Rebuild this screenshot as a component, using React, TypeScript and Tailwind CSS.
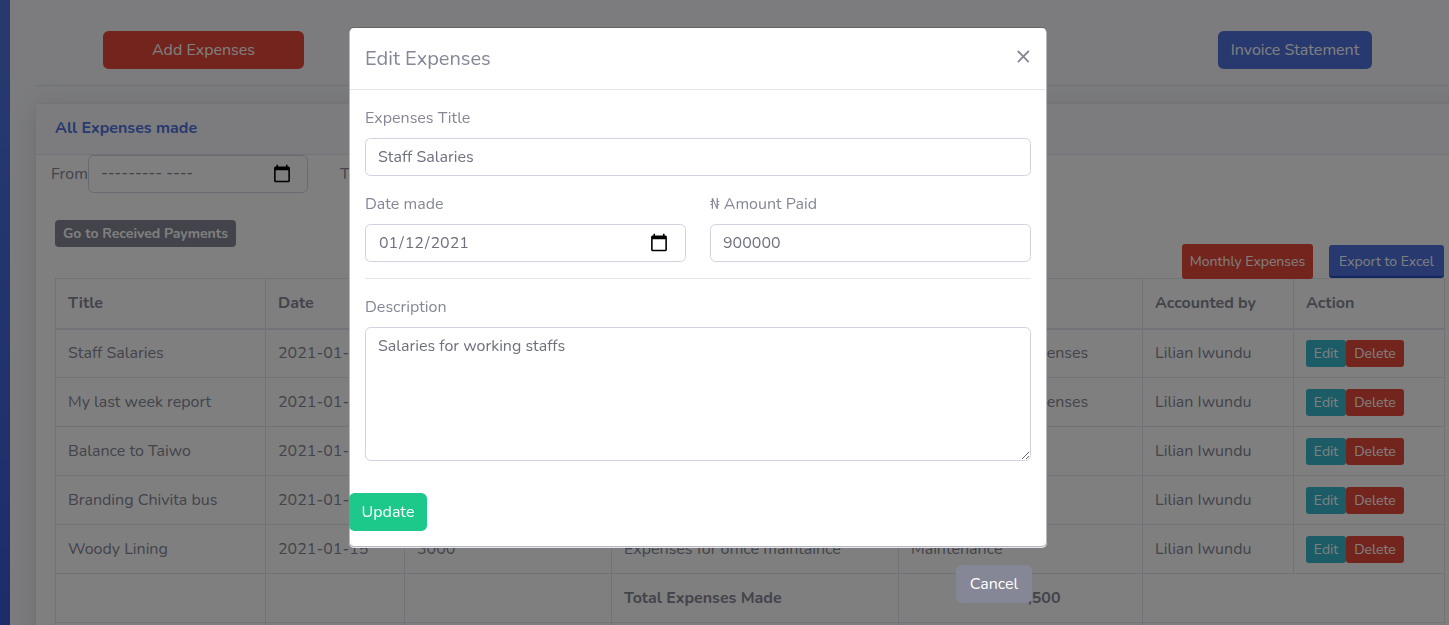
const rows = [
  ["Staff Salaries", "2021-01-12", "900000", "Salaries for working staffs", "Administrative Expenses"],
  ["My last week report", "2021-01-13", "45000", "Weekly report for staffs", "Administrative Expenses"],
  ["Balance to Taiwo", "2021-01-14", "20000", "Balance of payment", "Others"],
  ["Branding Chivita bus", "2021-01-14", "15500", "Branding of the bus", "Branding"],
  ["Woody Lining", "2021-01-15", "3000", "Expenses for office maintaince", "Maintenance"],
];

function Th({ children }: { children?: React.ReactNode }) {
  return <th className="border border-b-2 border-[#e3e6f0] px-3 text-left font-bold">{children}</th>;
}
function Td({ children, bold, span }: { children?: React.ReactNode; bold?: boolean; span?: number }) {
  return <td colSpan={span} className={`overflow-hidden whitespace-nowrap border border-[#e3e6f0] px-3 ${bold ? "font-bold" : ""}`}>{children}</td>;
}

const dateIcon = "[&::-webkit-calendar-picker-indicator]:h-[20px] [&::-webkit-calendar-picker-indicator]:w-[20px]";

export default function App() {
  return (
    <div className="relative h-[625px] w-[1449px] overflow-hidden bg-[#f8f9fc] text-base text-[#858796] font-['Nunito','Noto_Sans',sans-serif]">
      <div className="flex h-full">
        <div className="w-[10px] shrink-0 bg-[linear-gradient(180deg,#4e73df_10%,#3a5ad6_100%)]" />
        <div className="min-w-0 flex-1 pl-[24px]">
          <div className="flex h-[86px] items-start justify-between border-b border-[#e3e6f0] pl-[69px] pr-[77px] pt-[31px]">
            <button className="h-[38px] w-[201px] rounded-[5.6px] bg-[#e74a3b] text-white">Add Expenses</button>
            <button className="h-[38px] w-[154px] rounded-[5.6px] bg-[#4e73df] text-white">Invoice Statement</button>
          </div>
          <div className="ml-px mt-[17px] w-[1450px] rounded-l-[5.6px] border border-[#e3e6f0] bg-white shadow-[0_2px_28px_rgba(58,59,69,0.15)]">
            <div className="flex h-[51px] items-center border-b border-[#e3e6f0] bg-[#f8f9fc] pb-[2px] pl-[19px] font-bold text-[#4e73df]">All Expenses made</div>
            <div className="pl-[19px]">
              <div className="flex h-[38px] items-center">
                <span className="-ml-[4px] w-[37px]">From</span>
                <div className="relative h-[38px] w-[220px]">
                  <input type="date" className={`h-full w-full rounded-[5.6px] border border-[#d1d3e2] bg-white pl-3 pr-[13px] text-[#6e707e] [&::-webkit-datetime-edit]:opacity-0 ${dateIcon}`} />
                  <span className="absolute left-[13px] top-[6px] text-[#858796]">--------- ----</span>
                </div>
                <span className="ml-[32px]">To</span>
              </div>
              <div className="flex h-[85px] w-[1389px] items-start justify-between">
                <span className="mt-[27px] flex h-[27px] w-[181px] items-center justify-center rounded-[4px] bg-[#858796] text-sm font-bold text-white">Go to Received Payments</span>
                <div className="flex items-start">
                  <button className="mt-[51px] h-[35px] w-[131px] rounded-[3px] bg-[#e74a3b] text-sm text-white">Monthly Expenses</button>
                  <button className="ml-[16px] mt-[52px] h-[33px] w-[115px] rounded-[3px] border-b-2 border-[#224abe] bg-[#4e73df] pt-[2px] text-sm text-white">Export to Excel</button>
                </div>
              </div>
              <table className="w-[1389px] table-fixed border-collapse">
                <colgroup>
                  <col className="w-[210px]" />
                  <col className="w-[139px]" />
                  <col className="w-[207px]" />
                  <col className="w-[287px]" />
                  <col className="w-[244px]" />
                  <col className="w-[151px]" />
                  <col className="w-[151px]" />
                </colgroup>
                <thead>
                  <tr className="h-[50px]">
                    <Th>Title</Th><Th>Date</Th><Th>Amount</Th><Th>Description</Th><Th>Category</Th><Th>Accounted by</Th><Th>Action</Th>
                  </tr>
                </thead>
                <tbody>
                  {rows.map((r) => (
                    <tr key={r[0]} className="h-[49px]">
                      {r.map((c, i) => <Td key={i}>{c}</Td>)}
                      <Td>Lilian Iwundu</Td>
                      <Td>
                        <div className="flex">
                          <button className="h-[27px] w-[40px] rounded-[3px] bg-[#36b9cc] pt-px text-sm text-white">Edit</button>
                          <button className="h-[27px] w-[58px] rounded-[3px] bg-[#e74a3b] pt-px text-sm text-white">Delete</button>
                        </div>
                      </Td>
                    </tr>
                  ))}
                  <tr className="h-[49px]">
                    <Td /><Td /><Td />
                    <Td bold>Total Expenses Made</Td>
                    <Td bold><span className="pl-[88px]">983,500</span></Td>
                    <Td span={2} />
                  </tr>
                  <tr className="h-[49px]">
                    <Td /><Td /><Td /><Td /><Td /><Td span={2} />
                  </tr>
                </tbody>
              </table>
            </div>
          </div>
        </div>
      </div>

      <div className="fixed inset-0 bg-black/50">
        <div className="relative ml-[349px] mt-[27px] w-[698px] rounded-[4.8px] border border-black/20 bg-white bg-clip-padding shadow-[0_1px_0_#e6e6ee]">
          <div className="flex h-[62px] items-center justify-between border-b border-[#e3e6f0] pl-[15px] pr-[15px]">
            <h5 className="text-xl text-[#858796]">Edit Expenses</h5>
            <span className="-mt-[5px] text-[26px] font-medium leading-none text-[#858796]">×</span>
          </div>
          <div className="pb-[15px] pt-[16px]">
            <div className="px-[15px]">
              <label className="block leading-6">Expenses Title</label>
              <input readOnly value="Staff Salaries" className="mt-2 block h-[38px] w-full rounded-[5.6px] border border-[#d1d3e2] px-3 text-[#6e707e]" />
              <div className="mt-4 flex gap-6">
                <div className="flex-1">
                  <label className="block leading-6">Date made</label>
                  <input type="date" defaultValue="2021-01-12" className={`mt-2 block h-[38px] w-full rounded-[5.6px] border border-[#d1d3e2] pl-3 pr-[14px] text-[#6e707e] ${dateIcon}`} />
                </div>
                <div className="flex-1">
                  <label className="block leading-6">₦ Amount Paid</label>
                  <input readOnly value="900000" className="mt-2 block h-[38px] w-full rounded-[5.6px] border border-[#d1d3e2] px-3 text-[#6e707e]" />
                </div>
              </div>
              <hr className="mb-4 mt-4 border-[#e3e6f0]" />
              <label className="block leading-6">Description</label>
              <textarea readOnly value="Salaries for working staffs" className="mt-2 block h-[134px] w-full rounded-[5.6px] border border-[#d1d3e2] px-3 py-[6px] text-[#6e707e]" />
            </div>
            <button className="-ml-px mt-[32px] block h-[38px] w-[78px] rounded-[5.6px] bg-[#1cc88a] text-white">Update</button>
          </div>
          <button className="absolute left-[606px] top-[537px] h-[38px] w-[76px] rounded-[5.6px] bg-[#858796] text-white">Cancel</button>
        </div>
      </div>
    </div>
  );
}
